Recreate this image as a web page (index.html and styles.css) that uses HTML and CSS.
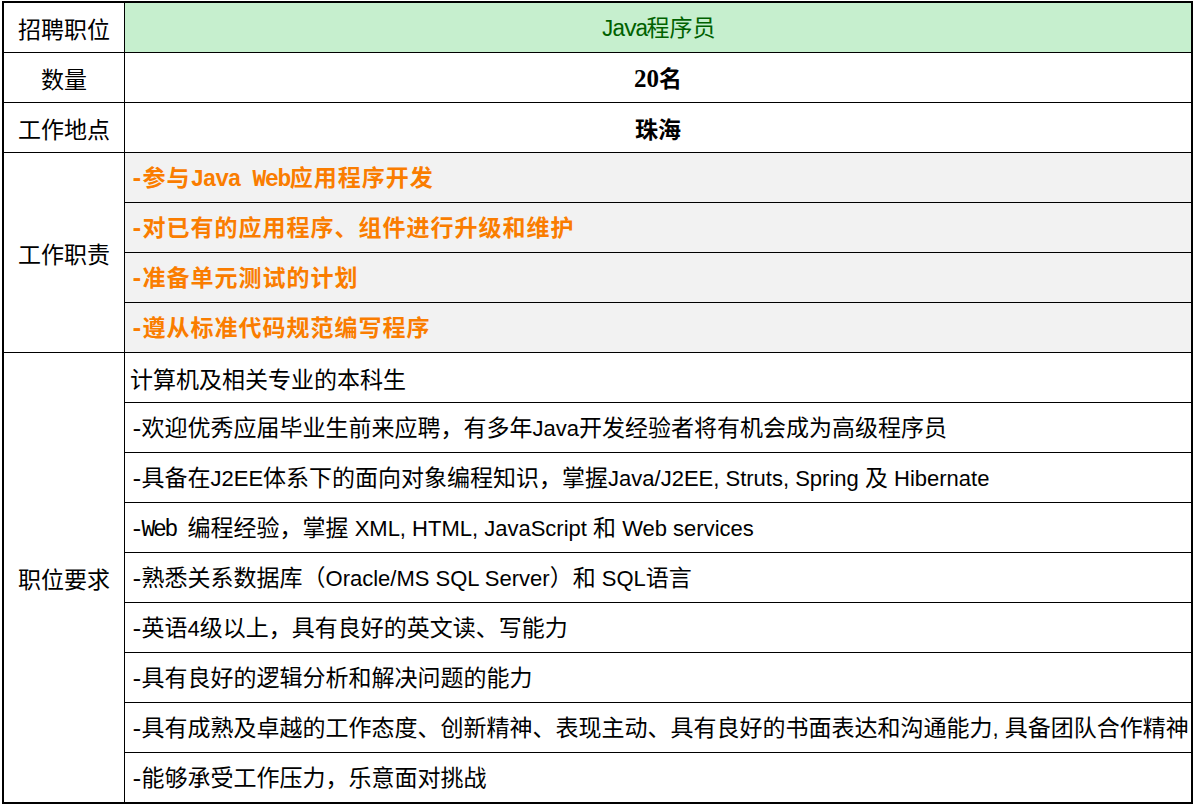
FILE: index.html
```html
<!DOCTYPE html>
<html lang="zh-CN">
<head>
<meta charset="utf-8">
<title>招聘职位</title>
<link rel="stylesheet" href="styles.css">
</head>
<body>
<div class="sheet">
  <div class="cell label"><span class="txt">招聘职位</span></div>
  <div class="cell val center good"><span class="txt"><span class="m">Java</span>程序员</span></div>

  <div class="cell label"><span class="txt">数量</span></div>
  <div class="cell val center strong"><span class="txt"><span class="s">20</span>名</span></div>

  <div class="cell label"><span class="txt">工作地点</span></div>
  <div class="cell val center strong"><span class="txt">珠海</span></div>

  <div class="cell label span4"><span class="txt">工作职责</span></div>
  <div class="cell val calc"><span class="txt"><span class="m">-</span>参与<span class="m">Java Web</span>应用程序开发</span></div>
  <div class="cell val calc"><span class="txt"><span class="m">-</span>对已有的应用程序、组件进行升级和维护</span></div>
  <div class="cell val calc"><span class="txt"><span class="m">-</span>准备单元测试的计划</span></div>
  <div class="cell val calc"><span class="txt"><span class="m">-</span>遵从标准代码规范编写程序</span></div>

  <div class="cell label span9"><span class="txt">职位要求</span></div>
  <div class="cell val"><span class="txt">计算机及相关专业的本科生</span></div>
  <div class="cell val"><span class="txt"><span class="m">-</span>欢迎优秀应届毕业生前来应聘，有多年<span class="t">Java</span>开发经验者将有机会成为高级程序员</span></div>
  <div class="cell val"><span class="txt"><span class="m">-</span>具备在<span class="t">J2EE</span>体系下的面向对象编程知识，掌握<span class="t">Java/J2EE, Struts, Spring </span>及<span class="t"> Hibernate</span></span></div>
  <div class="cell val"><span class="txt"><span class="m">-Web </span>编程经验，掌握<span class="t"> XML, HTML, JavaScript </span>和<span class="t"> Web services</span></span></div>
  <div class="cell val"><span class="txt"><span class="m">-</span>熟悉关系数据库（<span class="t">Oracle/MS SQL Server</span>）和<span class="t"> SQL</span>语言</span></div>
  <div class="cell val"><span class="txt"><span class="m">-</span>英语<span class="t">4</span>级以上，具有良好的英文读、写能力</span></div>
  <div class="cell val"><span class="txt"><span class="m">-</span>具有良好的逻辑分析和解决问题的能力</span></div>
  <div class="cell val"><span class="txt"><span class="m">-</span>具有成熟及卓越的工作态度、创新精神、表现主动、具有良好的书面表达和沟通能力<span class="t">, </span>具备团队合作精神</span></div>
  <div class="cell val"><span class="txt"><span class="m">-</span>能够承受工作压力，乐意面对挑战</span></div>
</div>
</body>
</html>
```

FILE: styles.css
```css
html, body {
  margin: 0;
  padding: 0;
  background: #ffffff;
}

body {
  padding: 1px 0 0 2px;
  font-family: "Noto Sans CJK SC", sans-serif;
  color: #000000;
}

.sheet {
  display: grid;
  grid-template-columns: 120px 1066px;
  grid-auto-rows: 49px;
  gap: 1px;
  width: max-content;
  background: #000000;
  border: 2px solid #000000;
}

.cell {
  display: flex;
  align-items: center;
  background: #ffffff;
  font-size: 23px;
  white-space: nowrap;
  overflow: hidden;
}

.txt {
  display: block;
  line-height: 30px;
  white-space: pre;
}

.label {
  grid-column: 1;
  justify-content: center;
  font-weight: 400;
}

.span4 {
  grid-row: span 4;
}

.span9 {
  grid-row: span 9;
}

.val {
  grid-column: 2;
  padding-left: 5px;
}

.center {
  justify-content: center;
  padding-left: 0;
}

.good {
  background: #c6efce;
  color: #006100;
}

.strong {
  font-weight: 700;
}

.calc {
  background: #f2f2f2;
  color: #fa7d00;
  font-weight: 700;
}

.calc .txt {
  letter-spacing: 1px;
}

.m {
  font-family: "Liberation Mono", monospace;
  letter-spacing: -0.1em;
}

.calc .m {
  letter-spacing: -0.06em;
}

.t {
  font-family: "Liberation Sans", sans-serif;
  font-size: 22px;
  letter-spacing: 0;
}

.s {
  font-family: "Liberation Serif", serif;
  font-size: 25px;
}
```
